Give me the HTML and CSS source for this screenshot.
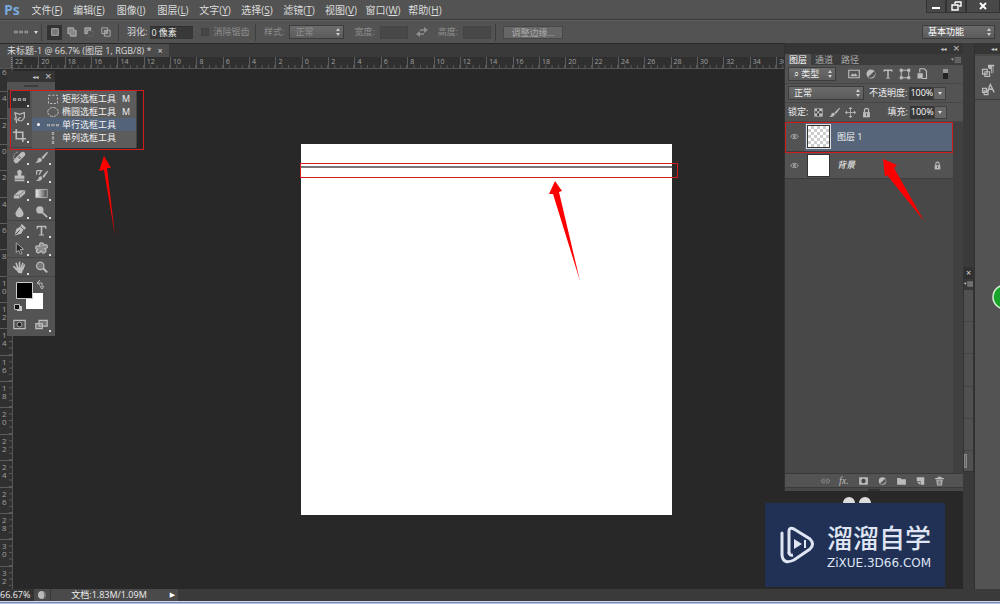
FILE: index.html
```html
<!DOCTYPE html>
<html lang="zh-CN">
<head>
<meta charset="utf-8">
<title>未标题-1</title>
<link rel="stylesheet" href="styles.css">
</head>
<body>
<svg class="defs" aria-hidden="true">
  <symbol id="eye" viewBox="0 0 16 12"><path d="M1 6q7-8 14 0q-7 8-14 0z" fill="none" stroke="currentColor" stroke-width="1.6"/><circle cx="8" cy="6" r="2.6" fill="currentColor"/><circle cx="9" cy="5" r="1" fill="#444"/></symbol>
  <symbol id="lock" viewBox="0 0 16 16"><path d="M5 8V5q0-3 3-3t3 3v3" fill="none" stroke="currentColor" stroke-width="1.8"/><path d="M3 7.500h10V15H3z" fill="currentColor"/><path d="M8 9.500v3" stroke="#444" stroke-width="1.500"/></symbol>
  <symbol id="menu" viewBox="0 0 14 8"><path d="M0 2h4L2 5z" fill="currentColor"/><path d="M5 1h9M5 4h9M5 7h9" stroke="currentColor"/></symbol>
  <symbol id="rowm" viewBox="0 0 16 16"><path d="M0 6.500h4v3H0zM6 6.500h4v3H6zM12 6.500h4v3h-4z" fill="currentColor"/><path d="M1 8h2M7 8h2M13 8h2" stroke="#444"/></symbol>
  <symbol id="brush" viewBox="0 0 16 16"><path d="M15 1L8 8l2 2 6-8zM7 8.500Q3 8 3 12q-1 2-3 2 6 2 9-3z" fill="currentColor"/></symbol>
  <symbol id="half" viewBox="0 0 16 16"><circle cx="8" cy="8" r="6" fill="currentColor"/><path d="M4 12A6 6 0 0 0 12.500 4z" fill="#555"/></symbol>
</svg>
<div class="app">
  <header class="menubar">
    <span class="brand">Ps</span>
    <nav class="menus">
      <button>文件(<u>F</u>)</button><button>编辑(<u>E</u>)</button><button>图像(<u>I</u>)</button><button>图层(<u>L</u>)</button><button>文字(<u>Y</u>)</button><button>选择(<u>S</u>)</button><button>滤镜(<u>T</u>)</button><button>视图(<u>V</u>)</button><button>窗口(<u>W</u>)</button><button>帮助(<u>H</u>)</button>
    </nav>
    <div class="winbtns">
      <button aria-label="最小化"><svg viewBox="0 0 12 10"><path d="M2 6h8v2H2z" fill="#fff"/></svg></button>
      <button aria-label="还原"><svg viewBox="0 0 12 10"><path d="M5 1h6v4H9M5 1v2M2 4h6v5H2z" fill="none" stroke="#fff" stroke-width="1.400"/></svg></button>
      <button class="close" aria-label="关闭"><svg viewBox="0 0 12 10"><path d="M3 2l6 6M9 2L3 8" stroke="#fff" stroke-width="1.800"/></svg></button>
    </div>
  </header>

  <div class="options">
    <div class="group preset"><svg class="i14"><use href="#rowm"/></svg><i class="caret"></i></div>
    <div class="group modes">
      <button class="on" aria-label="新选区"><svg viewBox="0 0 12 12"><path d="M2 2h8v8H2z" fill="#777" stroke="#bbb"/></svg></button>
      <button aria-label="添加到选区"><svg viewBox="0 0 12 12"><path d="M1 1h7v3h3v7H4V8H1z" fill="#888" stroke="#bbb"/></svg></button>
      <button aria-label="从选区减去"><svg viewBox="0 0 12 12"><path d="M1 1h7v3H4v4H1z" fill="#888" stroke="#bbb"/><path d="M5 5h6v6H5z" fill="none" stroke="#777" stroke-dasharray="1 1"/></svg></button>
      <button aria-label="与选区交叉"><svg viewBox="0 0 12 12"><path d="M1 1h7v7H1zM4 4h7v7H4z" fill="none" stroke="#bbb"/><path d="M4 4h4v4H4z" fill="#999"/></svg></button>
    </div>
    <div class="group feather">
      <label for="feather">羽化:</label><input id="feather" class="field" value="0 像素">
      <input id="aa" type="checkbox" disabled><label for="aa" class="dim">消除锯齿</label>
    </div>
    <div class="group style dim">
      <label for="style">样式:</label><select id="style" class="sel"><option>正常</option></select>
      <label for="w">宽度:</label><input id="w" class="field small" disabled>
      <svg class="swap" viewBox="0 0 12 10"><path d="M4 3h5M3 7h5" stroke="currentColor" stroke-width="1.500"/><path d="M8 0l4 3-4 3zM4 4v6L0 7z" fill="currentColor"/></svg>
      <label for="h">高度:</label><input id="h" class="field small" disabled>
    </div>
    <button class="refine">调整边缘...</button>
    <select class="sel workspace" aria-label="工作区"><option>基本功能</option></select>
  </div>

  <main class="main">
    <section class="doc">
      <div class="tabs"><div class="tab">未标题-1 @ 66.7% (图层 1, RGB/8) * <button aria-label="关闭文档">×</button></div></div>
      <div class="hruler"><span class="corner"></span><div class="cells" id="hr"></div></div>
      <div class="work">
        <div class="vruler" id="vr"></div>
        <div class="stage"><div class="canvas"><div class="line"></div></div></div>
      </div>

      <aside class="tools" aria-label="工具">
        <div class="phead"><span>◂◂</span><span>×</span></div>
        <div class="grip"></div>
        <div class="tgroup single">
          <button class="active more" aria-label="单行选框"><svg><use href="#rowm"/></svg></button>
          <button class="more" aria-label="套索"><svg viewBox="0 0 16 16"><path d="M2 2l6 2 6-2v6l-3 4-4 0M2 2l2 6q-3 1-1 3t2-2l-1 6M7 12q-1-4 3-4" fill="none" stroke="currentColor" stroke-width="1.500"/></svg></button>
          <button class="more" aria-label="裁剪"><svg viewBox="0 0 16 16"><path d="M4 0v12h12M0 4h12v12" fill="none" stroke="currentColor" stroke-width="2"/></svg></button>
        </div>
        <div class="tgroup">
          <button class="more" aria-label="修复画笔"><svg viewBox="0 0 16 16"><path d="M4 12l8-8" stroke="currentColor" stroke-width="6" stroke-linecap="round"/><path d="M6 7l3 3M7 6l3 3" stroke="#555"/><path d="M1 10Q0 2 7 1" fill="none" stroke="currentColor" stroke-dasharray="2 1"/></svg></button>
          <button class="more" aria-label="画笔"><svg><use href="#brush"/></svg></button>
          <button class="more" aria-label="图章"><svg viewBox="0 0 16 16"><path d="M6 8L5 3q3-4 6 0l-1 5h4v4H2V8zM2 13h12v2H2z" fill="currentColor"/></svg></button>
          <button class="more" aria-label="历史画笔"><svg viewBox="0 0 16 16"><path d="M15 2L9 9l2 2 5-8zM8 9q-4 0-4 4l-3 1q6 2 8-2z" fill="currentColor"/><path d="M2 2h6L5 7M2 2v5" fill="none" stroke="currentColor" stroke-width="1.500"/></svg></button>
          <button class="more" aria-label="橡皮擦"><svg viewBox="0 0 16 16"><path d="M1 10l7-6h7v4l-7 6H1z" fill="currentColor"/><path d="M1 10h7l7-6M8 10v4" stroke="#777" fill="none"/></svg></button>
          <button class="more" aria-label="渐变"><svg viewBox="0 0 16 16"><linearGradient id="gr"><stop stop-color="#eee"/><stop offset="1" stop-color="#444"/></linearGradient><path d="M1 3h14v10H1z" fill="url(#gr)" stroke="#bbb"/></svg></button>
          <button class="more" aria-label="模糊"><svg viewBox="0 0 16 16"><path d="M8 2q5 6 5 8.500a5 4.500 0 0 1-10 0Q3 8 8 2z" fill="currentColor"/></svg></button>
          <button class="more" aria-label="减淡"><svg viewBox="0 0 16 16"><circle cx="6" cy="6" r="4.500" fill="currentColor"/><path d="M9 9l6 6" stroke="currentColor" stroke-width="2"/></svg></button>
        </div>
        <div class="tgroup">
          <button class="more" aria-label="钢笔"><svg viewBox="0 0 16 16"><path d="M2 14l2-8 5-3 4 4-3 5zM9 2l2-2 5 5-2 2z" fill="currentColor"/><path d="M3 13l5-5" stroke="#444" stroke-width="1.200"/></svg></button>
          <button class="more" aria-label="文字"><svg viewBox="0 0 16 16"><path d="M2 2h12v4h-1l-1-2H9v9h2v1H5v-1h2V4H4L3 6H2z" fill="currentColor"/></svg></button>
          <button class="more" aria-label="路径选择"><svg viewBox="0 0 16 16"><path d="M4 1v12l3-3 2 5 2-1-2-5h4z" fill="#222" stroke="currentColor"/></svg></button>
          <button class="more" aria-label="形状"><svg viewBox="0 0 16 16"><path d="M6 5q-1-4 2-4t2 3q4-2 5 1t-3 3q3 3 0 5t-4-2q-2 3-5 2t0-4q-3-1-2-3t5-1z" fill="#888" stroke="currentColor" stroke-width="1.500"/></svg></button>
        </div>
        <div class="tgroup">
          <button class="more" aria-label="抓手"><svg viewBox="0 0 16 16"><path d="M4 10L1 7M6 9L4 3M8 8V1.500M10 9l2-6M12 10l2-5" stroke="currentColor" stroke-width="2" stroke-linecap="round"/><path d="M4 8h9l-2 7H7l-4-5z" fill="currentColor"/></svg></button>
          <button aria-label="缩放"><svg viewBox="0 0 16 16"><circle cx="6.500" cy="6" r="4.500" fill="#777" stroke="currentColor" stroke-width="1.500"/><path d="M10 9l5 5" stroke="currentColor" stroke-width="2.500"/></svg></button>
        </div>
        <svg class="swatches" viewBox="0 0 48 38"><path d="M19 16h17v16H19z" fill="#fff"/><path d="M9.500 5.500h16v16h-16z" fill="#000" stroke="#ccc"/><path d="M31 6h4v4M33 3l-3 3 3 2M33 9l2 3 2-3" stroke="#bbb" fill="none"/><path d="M10 29h5v5h-5z" fill="#ccc"/><path d="M7.500 27.500h5v5h-5z" fill="#111" stroke="#bbb"/></svg>
        <div class="tgroup last">
          <button aria-label="快速蒙版"><svg viewBox="0 0 16 16"><path d="M1 3h14v10H1z" fill="none" stroke="currentColor" stroke-width="1.500"/><circle cx="8" cy="8" r="3" fill="#222" stroke="currentColor"/></svg></button>
          <button class="more" aria-label="屏幕模式"><svg viewBox="0 0 16 16"><path d="M1 7h8v6H1zM5 3h10v7H5z" fill="#777" stroke="currentColor" stroke-width="1.500"/></svg></button>
        </div>
        <div class="flyout">
          <button><i></i><svg viewBox="0 0 16 16"><path d="M2 3h12v11H2z" fill="none" stroke="currentColor" stroke-width="1.300" stroke-dasharray="3 2"/></svg><span>矩形选框工具</span><kbd>M</kbd></button>
          <button><i></i><svg viewBox="0 0 16 16"><ellipse cx="8" cy="8" rx="7" ry="6" fill="none" stroke="currentColor" stroke-width="1.300" stroke-dasharray="4 1"/></svg><span>椭圆选框工具</span><kbd>M</kbd></button>
          <button class="picked"><i class="dot"></i><svg><use href="#rowm"/></svg><span>单行选框工具</span></button>
          <button><i></i><svg viewBox="0 0 16 16"><path d="M6.500 0h3v4h-3zM6.500 6h3v4h-3zM6.500 12h3v4h-3z" fill="currentColor"/><path d="M8 1v2M8 7v2M8 13v2" stroke="#444"/></svg><span>单列选框工具</span></button>
        </div>
      </aside>
    </section>

    <aside class="panelcol">
      <section class="panel">
        <div class="phead"><span>◂◂</span><span>×</span></div>
        <div class="ptabs"><button class="on">图层</button><button>通道</button><button>路径</button><svg><use href="#menu"/></svg></div>
        <div class="prow filter">
          <select class="sel" aria-label="滤镜类型"><option>⌕ 类型</option></select>
          <svg viewBox="0 0 16 16"><path d="M1 3h14v10H1z" fill="none" stroke="currentColor" stroke-width="1.500"/><path d="M3 11l3-4 2 2 2-2 3 4z" fill="currentColor"/></svg>
          <svg><use href="#half"/></svg>
          <svg viewBox="0 0 16 16"><path d="M2 2h12v3h-1l-1-1H9v9h2v1H5v-1h2V4H4L3 5H2z" fill="currentColor"/></svg>
          <svg viewBox="0 0 16 16"><path d="M3 3h10v10H3z" fill="none" stroke="currentColor" stroke-width="1.300"/><path d="M1 1h4v4H1zM11 1h4v4h-4zM1 11h4v4H1zM11 11h4v4h-4z" fill="currentColor"/></svg>
          <svg viewBox="0 0 16 16"><path d="M5 1h6l3 3v10H8M5 1v5" fill="none" stroke="currentColor" stroke-width="1.500"/><path d="M2 7h7v7H2z" fill="currentColor"/></svg>
          <i class="toggle"></i>
        </div>
        <div class="prow blend">
          <select class="sel" aria-label="混合模式"><option>正常</option></select>
          <label for="op">不透明度:</label><span class="num"><input id="op" value="100%"><button aria-label="不透明度滑块"><i class="caret"></i></button></span>
        </div>
        <div class="prow locks">
          <span>锁定:</span>
          <svg viewBox="0 0 16 16"><path d="M2 2h12v12H2z" fill="currentColor"/><path d="M6 3h3v3H6zM3 6h3v3H3zM9 6h4v3H9zM6 9h3v4H6z" fill="#444"/></svg>
          <svg><use href="#brush"/></svg>
          <svg viewBox="0 0 16 16"><path d="M8 2v12M2 8h12" stroke="currentColor" stroke-width="1.200"/><path d="M8 0l3 3H5zM8 16l3-3H5zM0 8l3-3v6zM16 8l-3-3v6z" fill="currentColor"/></svg>
          <svg><use href="#lock"/></svg>
          <label for="fill">填充:</label><span class="num"><input id="fill" value="100%"><button aria-label="填充滑块"><i class="caret"></i></button></span>
        </div>
        <div class="layers">
          <div class="layer selected"><svg class="eye"><use href="#eye"/></svg><i class="thumb checker"></i><span>图层 1</span></div>
          <div class="layer"><svg class="eye"><use href="#eye"/></svg><i class="thumb"></i><em>背景</em><svg class="lk"><use href="#lock"/></svg></div>
        </div>
        <div class="pfoot">
          <svg viewBox="0 0 16 16"><path d="M7 5H3q-3 3 0 6h4M9 5h4q3 3 0 6H9M4 8h8" fill="none" stroke="#888" stroke-width="1.500"/></svg>
          <i class="fx">fx.</i>
          <svg viewBox="0 0 16 16"><path d="M1 2h14v12H1z" fill="currentColor"/><circle cx="8" cy="8" r="3.500" fill="#444"/></svg>
          <svg><use href="#half"/></svg>
          <svg viewBox="0 0 16 16"><path d="M1 3h5l2 2h7v9H1z" fill="currentColor"/></svg>
          <svg viewBox="0 0 16 16"><path d="M2 2h12v12H8V8H2z" fill="currentColor"/><path d="M2 9h5v5z" fill="currentColor"/></svg>
          <svg viewBox="0 0 16 16"><path d="M1 3h14v2H1zM5 1h6v2H5zM3 6h10l-1 9H4z" fill="currentColor"/><path d="M6 7v7M8 7v7M10 7v7" stroke="#555"/></svg>
        </div>
        <div class="pgrip"></div>
      </section>
      <div class="mascot"><i></i><i></i></div>
    </aside>

    <div class="strip"><div class="mini"><div class="minihead">×</div><div class="minimenu"><svg><use href="#menu"/></svg></div><i></i><i></i><i></i><i></i><i></i><i class="thumbbar"></i></div></div>
    <aside class="dock">
      <div class="phead"><span>◂◂</span></div>
      <div class="dockbox">
        <button aria-label="段落样式"><svg viewBox="0 0 18 18"><path d="M9 1h8v2h-1v9h-1V3h-1v9h-1V7q-5 0-4-6z" fill="currentColor"/><path d="M2 7h6v6H2zM5 10h6v6H5z" fill="none" stroke="currentColor" stroke-width="1.500"/></svg></button>
        <button aria-label="字符样式"><svg viewBox="0 0 18 18"><path d="M8 12l4-10 5 10M10 8h5" fill="none" stroke="currentColor" stroke-width="1.800"/><path d="M2 7h5v5H2zM4 10h5v5H4z" fill="none" stroke="currentColor" stroke-width="1.500"/></svg></button>
      </div>
    </aside>
  </main>

  <footer class="status"><span class="zoom">66.67%</span><span class="ball"><i></i></span><span class="info">文档:1.83M/1.09M</span><button aria-label="更多信息">▶</button></footer>
  <div class="edge"></div>

  <svg class="marks" viewBox="0 0 1000 604" aria-hidden="true">
    <g fill="none" stroke="#d01c1c"><rect x="10.500" y="90.500" width="133" height="59"/><rect x="785.500" y="122.500" width="167" height="30"/><rect x="300.500" y="163.500" width="377" height="14"/></g>
    <g fill="#f00"><path d="M104 156l7 12-4 0 8 68-11-66-5 1z"/><path d="M555 181l7 10-3 1 21 89-27-87-4 0z"/><path d="M883 159l14 6-3 3 30 53-37-46-2 2z"/></g>
    <circle cx="1005" cy="297" r="12" fill="#19a52c" stroke="#d9efd9" stroke-width="1.500"/>
  </svg>

  <div class="watermark">
    <svg viewBox="0 0 36 38"><path d="M9 27V5q0-4 5-2l16 10q5 5 0 10L14 34q-11 5-12-5V7" fill="none" stroke="#dfe5f2" stroke-width="3" stroke-linecap="round"/><path d="M9 26q0 4 4 3" fill="none" stroke="#dfe5f2" stroke-width="3"/><path d="M14 13l8 5-8 5zM24 14h2v8h-2z" fill="#dfe5f2"/></svg>
    <div><strong>溜溜自学</strong><span>ZiXUE.3D66.COM</span></div>
  </div>
</div>
<script src="rulers.js"></script>
</body>
</html>
```
FILE: styles.css
```css
* { box-sizing: border-box; }
body { margin: 0; background: #282828; color: #ddd; font: 9px/12px "Open Sans", "Noto Sans CJK SC", sans-serif; overflow: hidden; }
button, input, select { font: inherit; color: inherit; margin: 0; padding: 0; border: 0; background: none; border-radius: 0; }
svg, i { display: block; flex: none; }
.defs { position: absolute; width: 0; height: 0; }
.app { position: relative; display: flex; flex-direction: column; height: 100vh; }
.menubar { display: flex; align-items: center; height: 20px; background: #535353; border-bottom: 1px solid #3a3a3a; }
.brand { width: 26px; padding-left: 4px; color: #7aa9dc; font: bold 14px/18px "Open Sans", sans-serif; }
.menus { display: flex; font-size: 10px; }
.menus button { width: 42px; white-space: nowrap; text-align: center; }
.winbtns { display: flex; align-self: flex-start; margin-left: auto; height: 13px; }
.winbtns button { width: 20px; display: grid; place-items: center; background: #484848; border: 1px solid #333; border-top: 0; }
.winbtns .close { width: 34px; }
.winbtns svg { width: 12px; height: 10px; }

.options { display: flex; align-items: center; height: 23px; background: #535353; border-top: 1px solid #5e5e5e; }
.group { display: flex; align-items: center; height: 17px; border-right: 1px solid #3e3e3e; }
.i14 { width: 14px; height: 14px; }
.caret { width: 0; border: 2px solid transparent; border-top: 3px solid #ddd; border-bottom: 0; }
.preset { width: 42px; padding-left: 14px; gap: 6px; color: #aaa; }
.modes { width: 77px; padding-left: 5px; gap: 2px; }
.modes button { width: 15px; height: 15px; display: grid; place-items: center; }
.modes .on { background: #333; }
.modes svg { width: 10px; height: 10px; }
.feather { width: 137px; padding-left: 8px; gap: 3px; }
.field { width: 43px; height: 13px; background: #383838; border-top: 1px solid #303030; padding-left: 1px; color: #eee; }
.field.small { width: 28px; background: #484848; border: 1px solid #444; }
.feather input[type=checkbox] { appearance: none; width: 8px; height: 8px; margin: 0 1px 0 5px; background: #464646; border: 1px solid #404040; }
.dim { color: #8f8f8f; }
.style { width: 240px; padding-left: 8px; gap: 5px; }
.style select { width: 55px; margin-right: 5px; }
.swap { width: 12px; height: 10px; margin: 0 5px 0 3px; }
.sel { appearance: none; height: 14px; padding: 0 10px 0 5px; border: 1px solid #3c3c3c; color: inherit; background: url("data:image/svg+xml,%3Csvg xmlns='http://www.w3.org/2000/svg' width='6' height='8'%3E%3Cpath d='M1 3l2-3 2 3zM1 5l2 3 2-3z' fill='%23ccc'/%3E%3C/svg%3E") no-repeat right 2px center, linear-gradient(#6b6b6b, #5b5b5b); }
.refine { width: 60px; height: 13px; line-height: 11px; margin-left: 7px; background: #666; color: #aaa; border: 1px solid #484848; }
.workspace { width: 73px; margin: 0 5px 0 auto; color: #fff; }

.main { flex: 1; min-height: 0; display: flex; }
.doc { position: relative; flex: 1; min-width: 0; display: flex; flex-direction: column; overflow: hidden; }
.tabs { height: 14px; background: #3a3a3a; border-top: 1px solid #282828; display: flex; }
.tab { display: flex; gap: 6px; width: 169px; padding-left: 7px; background: #4c4c4c; white-space: nowrap; line-height: 14px; }
.hruler { height: 12px; display: flex; background: #303030; border-bottom: 1px solid #555; color: #a0a0a0; font-size: 7px; }
.corner { width: 12px; background: #4a4a4a; border-right: 1px dotted #888; }
.cells { flex: 1; display: flex; overflow: hidden; }
.cells span { flex: 0 0 calc(100% / 29.300); height: 11px; line-height: 9px; padding-left: 2px; border-left: 1px solid #5c5c5c; background: linear-gradient(90deg, transparent calc(100% - 1px), #5c5c5c 0) 0 8px / 25% 3px repeat-x; }
.work { flex: 1; min-height: 0; display: flex; }
.vruler { width: 13px; overflow: hidden; display: flex; flex-direction: column; background: #303030; border-right: 1px solid #555; color: #a0a0a0; font-size: 8px; line-height: 8px; }
.vruler span { flex: 0 0 calc(100% / 19.730); padding: 2px 6px 0 2px; width: 12px; word-break: break-all; border-top: 1px solid #5c5c5c; background: linear-gradient(transparent calc(100% - 1px), #5c5c5c 0) 9px 0 / 3px 25% repeat-y; }
.vruler span:first-child { margin-top: -4px; }
.stage { flex: 1; padding: 75px 0 0 288px; }
.canvas { width: 371px; height: 371px; background: #fff; padding-top: 22px; }
.line { height: 2px; background: #777; }

.phead { display: flex; justify-content: flex-end; gap: 6px; height: 11px; padding-right: 3px; background: #353535; color: #ccc; font: 9px/11px "DejaVu Sans", sans-serif; }
.phead span:first-child { font-size: 6px; }
.tools { position: absolute; left: 7px; top: 28px; width: 48px; background: #535353; padding-bottom: 3px; color: #bcbcbc; }
.grip { width: 14px; height: 3px; margin: 3px 17px; margin-bottom: 2px; border-top: 2px solid #3c3c3c; }
.tgroup { display: grid; grid-template-columns: 22px 22px; padding: 0 1px; border-bottom: 1px solid #444; }
.tgroup.single { grid-template-columns: 22px; padding-bottom: 3px; }
.tgroup.last { border: 0; }
.tgroup button { position: relative; height: 18px; display: grid; place-items: center; }
.tgroup svg { width: 13px; height: 13px; }
.tgroup .active { background: #333; }
.more::after { content: ""; position: absolute; right: 1px; bottom: 1px; width: 2px; height: 2px; background: #ddd; }
.swatches { width: 48px; height: 38px; }
.flyout { position: absolute; left: 25px; top: 20px; width: 105px; padding: 1px 0 4px; background: #5c5c5c; border-right: 1px solid #444; box-shadow: 6px 0 #252525; color: #f0f0f0; }
.flyout button { display: flex; align-items: center; width: 100%; height: 13px; }
.flyout i { width: 3px; height: 3px; margin: 0 7px 0 5px; border-radius: 50%; }
.flyout .dot { background: #fff; }
.flyout svg { width: 12px; height: 12px; margin-right: 3px; color: #bbb; }
.flyout .picked { background: #53637a; }
.flyout kbd { margin-left: auto; padding-right: 6px; font: inherit; }

.panelcol { width: 179px; display: flex; flex-direction: column; }
.panel { flex: 1; min-height: 0; display: flex; flex-direction: column; border-left: 1px solid #303030; background: #535353; }
.ptabs { display: flex; height: 11px; background: #3c3c3c; color: #aaa; line-height: 11px; }
.ptabs button { width: 26px; }
.ptabs .on { background: #535353; color: #fff; }
.ptabs svg { width: 10px; height: 6px; margin: 3px 2px 0 auto; }
.prow { display: flex; align-items: center; height: 19px; padding: 0 4px 0 3px; border-bottom: 1px solid #464646; color: #eee; }
.prow svg { width: 12px; height: 12px; color: #bcbcbc; }
.filter { gap: 5px; }
.filter select { width: 48px; margin-right: 7px; }
.toggle { width: 5px; height: 10px; margin-left: 10px; background: #222; border-top: 4px solid #999; }
.blend select { width: 76px; }
.blend label { margin-left: 5px; }
.num { display: flex; height: 13px; margin-left: 2px; }
.num input { width: 24px; background: #383838; color: #fff; padding-left: 1px; }
.num button { width: 13px; display: grid; place-items: center; background: #666; border: 1px solid #404040; }
.locks { gap: 5px; }
.locks label { margin-left: 10px; }
.locks .num { margin-left: -3px; }
.locks svg { width: 11px; height: 11px; }
.layers { flex: 1; border-right: 10px solid #404040; background: #484848; }
.layer { display: flex; align-items: center; height: 27px; background: #535353; border-bottom: 1px solid #3c3c3c; color: #f2f2f2; }
.layer.selected { height: 30px; background: linear-gradient(90deg, #535353 20px, #566579 0); }
.eye { width: 9px; height: 7px; margin: 0 8px 0 5px; color: #aaa; }
.thumb { width: 23px; height: 23px; margin-right: 7px; background: #fff; border: 1px solid #333; }
.checker { background: conic-gradient(#ccc 25%, #fff 0 50%, #ccc 0 75%, #fff 0) 0 0 / 6px 6px; outline: 1px solid #ddd; }
.lk { width: 9px; height: 9px; margin: 0 11px 0 auto; color: #bbb; }
.pfoot { display: flex; justify-content: flex-end; align-items: center; gap: 8px; height: 14px; padding-right: 18px; border-top: 1px solid #383838; color: #bbb; }
.pfoot svg { width: 11px; height: 10px; }
.fx { font: italic 10px/12px "Liberation Serif", serif; width: 11px; }
.pgrip { height: 4px; border-top: 1px solid #3a3a3a; background: linear-gradient(#333, #333) center / 12px 2px no-repeat #484848; }
.mascot { height: 98px; background: #282828; display: flex; gap: 4px; padding: 6px 0 0 59px; }
.mascot i { width: 12px; height: 12px; border-radius: 50%; background: #ddd; }
.strip { width: 11px; padding-top: 224px; background: #3a3a3a; }
.mini { height: 205px; display: flex; flex-direction: column; background: #505050; border: 1px solid #333; }
.minihead { height: 11px; background: #303030; color: #ddd; text-align: center; line-height: 10px; }
.minimenu { height: 11px; background: #383838; padding-top: 2px; }
.minimenu svg { width: 9px; height: 6px; }
.mini i { flex: 1; border-bottom: 1px solid #444; }
.mini .thumbbar { flex: none; width: 3px; height: 14px; margin: 3px 0; background: #666; border: 1px solid #888; }
.dock { width: 26px; background: #535353; border-left: 1px solid #303030; }
.dockbox { display: grid; height: 46px; border-bottom: 1px solid #3c3c3c; padding-top: 5px; border-top: 2px solid #484848; }
.dockbox button { display: grid; place-items: center; color: #bcbcbc; }
.dockbox svg { width: 14px; height: 14px; }

.status { display: flex; height: 12px; background: #3a3a3a; color: #eee; line-height: 12px; }
.zoom { width: 34px; background: #333; }
.ball { width: 17px; background: #4a4a4a; border-right: 1px solid #383838; display: grid; place-items: center; }
.ball i { width: 8px; height: 8px; border-radius: 50%; background: #bbb; border-right: 2px solid #777; }
.info { width: 116px; text-align: center; background: #4a4a4a; }
.status button { width: 11px; background: #4a4a4a; color: #fff; font: 7px/12px "DejaVu Sans", sans-serif; }
.edge { height: 3px; background: #7784bd; border-top: 1px solid #d0d5ea; border-bottom: 1px solid #b8bedc; }
.marks { position: absolute; left: 0; top: 0; width: 1000px; height: 604px; pointer-events: none; }
.watermark { position: absolute; right: 55px; bottom: 17px; width: 180px; height: 84px; display: flex; align-items: center; gap: 11px; padding-left: 15px; background: #213055; color: #dfe5f2; }
.watermark svg { width: 36px; height: 38px; }
.watermark strong { display: block; height: 32px; font: 500 26px/32px "Noto Sans CJK SC", sans-serif; }
.watermark span { display: block; padding-top: 3px; font: 12px/14px "DejaVu Sans", sans-serif; }
```
FILE: rulers.js
```js
function fill(id, from, to) {
  var box = document.getElementById(id);
  for (var n = from; n <= to; n += 2) {
    var cell = document.createElement("span");
    cell.textContent = Math.abs(n);
    box.appendChild(cell);
  }
}
fill("hr", -22, 36);
fill("vr", -6, 32);
```
